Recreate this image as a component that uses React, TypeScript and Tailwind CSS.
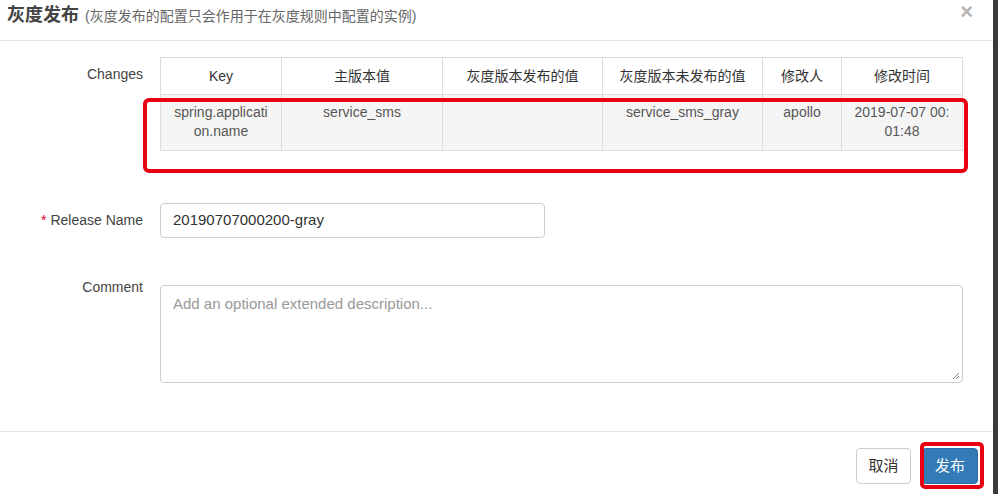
import * as React from 'react';

const font = { fontFamily: '"Liberation Sans", "Noto Sans CJK SC", sans-serif' };

const headers = ['Key', '主版本值', '灰度版本发布的值', '灰度版本未发布的值', '修改人', '修改时间'];
const widths = ['w-[121px]', 'w-[161px]', 'w-[160px]', 'w-[160px]', 'w-[79px]', 'w-[121px]'];
const row = ['spring.applicati on.name', 'service_sms', '', 'service_sms_gray', 'apollo', '2019-07-07 00: 01:48'];

export default function App() {
  return (
    <div className="flex h-[494px] w-[998px] overflow-hidden bg-white" style={font}>
      <div className="flex flex-1 flex-col bg-white">
        {/* header */}
        <div className="flex h-[41px] shrink-0 items-start justify-between border-b border-[#e5e5e5] pl-[7px] pr-[20px]">
          <div className="flex items-baseline leading-[30px]">
            <span className="text-[18px] font-bold text-[#444]">灰度发布</span>
            <span className="ml-[6px] text-[14px] text-[#666]">(灰度发布的配置只会作用于在灰度规则中配置的实例)</span>
          </div>
          <span className="mt-[-3px] text-[22px] font-bold leading-[30px] text-[#b5b5b5]">×</span>
        </div>

        {/* body */}
        <div className="flex-1 pt-[16px]">
          <div className="flex">
            <div className="w-[144px] shrink-0 pr-[1px] pt-[7px] text-right text-[14px] leading-[20px] text-[#444]">
              Changes
            </div>
            <div className="relative ml-[16px]">
              <table className="border-collapse text-[14px] text-[#555]">
                <thead>
                  <tr>
                    {headers.map((h, i) => (
                      <th
                        key={i}
                        className={`${widths[i]} h-[37px] border border-[#ddd] text-center font-normal leading-[20px] text-[#333]`}
                      >
                        {h}
                      </th>
                    ))}
                  </tr>
                </thead>
                <tbody>
                  <tr className="bg-[#f5f5f5]">
                    {row.map((c, i) => (
                      <td
                        key={i}
                        className="h-[56px] break-all border border-[#ddd] px-[8px] pt-[8px] text-center align-top leading-[19px]"
                      >
                        {c}
                      </td>
                    ))}
                  </tr>
                </tbody>
              </table>
              <div className="pointer-events-none absolute left-[-17px] top-[41px] h-[75px] w-[825px] rounded-[6px] border-[4px] border-[#e60012]" />
            </div>
          </div>

          <div className="mt-[52px] flex">
            <div className="w-[144px] shrink-0 pr-[1px] pt-[7px] text-right text-[14px] leading-[20px] text-[#444]">
              <span className="mr-[4px] text-[#d9001b]">*</span>Release Name
            </div>
            <div className="ml-[16px] flex h-[35px] w-[385px] items-center rounded-[4px] border border-[#ccc] px-[12px] text-[15px] text-[#333]">
              20190707000200-gray
            </div>
          </div>

          <div className="mt-[39px] flex">
            <div className="w-[144px] shrink-0 pr-[1px] text-right text-[14px] leading-[20px] text-[#444]">
              Comment
            </div>
            <div className="relative ml-[16px] mt-[8px] h-[98px] w-[803px] rounded-[4px] border border-[#ccc] px-[12px] pt-[7px] text-[15px] text-[#999]">
              Add an optional extended description...
              <svg className="absolute bottom-[2px] right-[2px]" width="8" height="8" viewBox="0 0 8 8">
                <path d="M7 1 L1 7 M7 4 L4 7" stroke="#888" strokeWidth="1" />
              </svg>
            </div>
          </div>
        </div>

        {/* footer */}
        <div className="flex h-[63px] shrink-0 items-start justify-end gap-[11px] border-t border-[#e5e5e5] pr-[15px] pt-[16px]">
          <div className="flex h-[36px] w-[55px] items-center justify-center rounded-[4px] border border-[#ccc] bg-white text-[15px] text-[#333]">
            取消
          </div>
          <div className="relative flex h-[36px] w-[56px] items-center justify-center rounded-[4px] border border-[#2e6da4] bg-[#337ab7] text-[15px] text-white">
            发布
            <div className="pointer-events-none absolute left-[-3px] top-[-7px] h-[47px] w-[64px] rounded-[5px] border-[4px] border-[#e60012]" />
          </div>
        </div>
      </div>
      <div className="w-[5px] shrink-0 bg-[#3a3a3a]" />
    </div>
  );
}
